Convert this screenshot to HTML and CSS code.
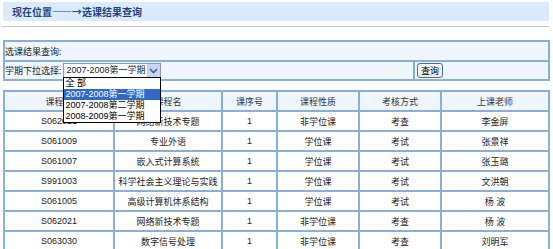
FILE: index.html
```html
<!DOCTYPE html>
<html lang="zh-CN">
<head>
<meta charset="utf-8">
<title>选课结果查询</title>
<link rel="stylesheet" href="styles.css">
</head>
<body>
<div class="page">
  <div class="title">现在位置——→选课结果查询</div>
  <div class="rule"></div>

  <div class="query">
    <div class="qcell span">选课结果查询:</div>
    <div class="qcell">
      <span class="label">学期下拉选择:</span>
      <div class="select">
        <span class="sel-text">2007-2008第一学期</span>
        <span class="sel-btn"><svg width="9" height="6" viewBox="0 0 9 6"><path d="M1 1 L4.5 4.5 L8 1" fill="none" stroke="#4d6185" stroke-width="1.6"/></svg></span>
        <ul class="options">
          <li>全 部</li>
          <li class="active">2007-2008第一学期</li>
          <li>2007-2008第二学期</li>
          <li>2008-2009第一学期</li>
        </ul>
      </div>
    </div>
    <div class="qcell"><button class="btn">查询</button></div>
  </div>

  <div class="grid">
    <div class="h">课程号</div><div class="h">课程名</div><div class="h">课序号</div><div class="h">课程性质</div><div class="h">考核方式</div><div class="h">上课老师</div>
    <div class="c">S062021</div><div class="c">网络新技术专题</div><div class="c">1</div><div class="c">非学位课</div><div class="c">考查</div><div class="c">李金屏</div>
    <div class="c">S061009</div><div class="c">专业外语</div><div class="c">1</div><div class="c">学位课</div><div class="c">考试</div><div class="c">张景祥</div>
    <div class="c">S061007</div><div class="c">嵌入式计算系统</div><div class="c">1</div><div class="c">学位课</div><div class="c">考试</div><div class="c">张玉璐</div>
    <div class="c">S991003</div><div class="c">科学社会主义理论与实践</div><div class="c">1</div><div class="c">学位课</div><div class="c">考试</div><div class="c">文洪朝</div>
    <div class="c">S061005</div><div class="c">高级计算机体系结构</div><div class="c">1</div><div class="c">学位课</div><div class="c">考试</div><div class="c">杨 波</div>
    <div class="c">S062021</div><div class="c">网络新技术专题</div><div class="c">1</div><div class="c">非学位课</div><div class="c">考查</div><div class="c">杨 波</div>
    <div class="c">S063030</div><div class="c">数字信号处理</div><div class="c">1</div><div class="c">非学位课</div><div class="c">考查</div><div class="c">刘明军</div>
  </div>
</div>
</body>
</html>
```

FILE: styles.css
```css
* { box-sizing: border-box; }
html, body { margin: 0; padding: 0; background: #fff; }
body {
  font-family: "Liberation Sans", "Noto Sans CJK SC", sans-serif;
  font-size: 9px;
  color: #222;
  overflow: hidden;
}
.page {
  padding: 2px 0 0 3px;
  width: 553px;
}
.title {
  width: 546px;
  height: 19px;
  line-height: 19px;
  background: #dcebfc;
  padding-left: 9px;
  font-family: "Noto Sans CJK SC", sans-serif;
  font-size: 10px;
  font-weight: bold;
  color: #1d4382;
}
.rule {
  margin: 5px 0 0 -1px;
  width: 547px;
  height: 1px;
  background: #c4c4c4;
}
.query {
  margin-top: 13px;
  width: 547px;
  display: grid;
  grid-template-columns: 408px 133px;
  grid-template-rows: 18px 17px;
  gap: 2px;
  padding: 2px;
  background: #8aaed6;
}
.qcell {
  background: #f0f6fe;
  display: flex;
  align-items: center;
}
.qcell.span { grid-column: 1 / 3; }
.label { margin-right: 1px; }
.select {
  position: relative;
  width: 98px;
  height: 15px;
  border: 1px solid #7f9db9;
  background: #fff;
  display: flex;
  align-items: center;
}
.sel-text { flex: 1; padding-left: 3px; line-height: 13px; }
.sel-btn {
  width: 13px;
  height: 13px;
  background: #c6d6f6;
  border-left: 1px solid #b8c9ec;
  display: flex;
  align-items: center;
  justify-content: center;
}
.options {
  position: absolute;
  left: -1px;
  top: 13px;
  width: 98px;
  margin: 0;
  padding: 0;
  list-style: none;
  border: 1px solid #000;
  background: #fff;
  z-index: 5;
}
.options li {
  height: 11px;
  line-height: 11px;
  padding-left: 2px;
  color: #000;
  overflow: hidden;
  white-space: nowrap;
}
.options li.active { background: #316ac5; color: #fff; }
.btn {
  margin-left: 2px;
  width: 26px;
  height: 15px;
  padding: 0;
  font: inherit;
  color: #000;
  background: linear-gradient(#fbfbf8, #ebeae3);
  border: 1px solid #4e6d99;
  border-radius: 3px;
}
.grid {
  margin-top: 9px;
  width: 547px;
  display: grid;
  grid-template-columns: 108px 106px 53px 80px 80px 106px;
  grid-auto-rows: 18px;
  gap: 2px;
  padding: 2px;
  background: #8aaed6;
}
.grid > div {
  display: flex;
  align-items: center;
  justify-content: center;
  background: #fff;
  white-space: nowrap;
}
.grid > .h { background: #f0f6fe; color: #333; }
```
